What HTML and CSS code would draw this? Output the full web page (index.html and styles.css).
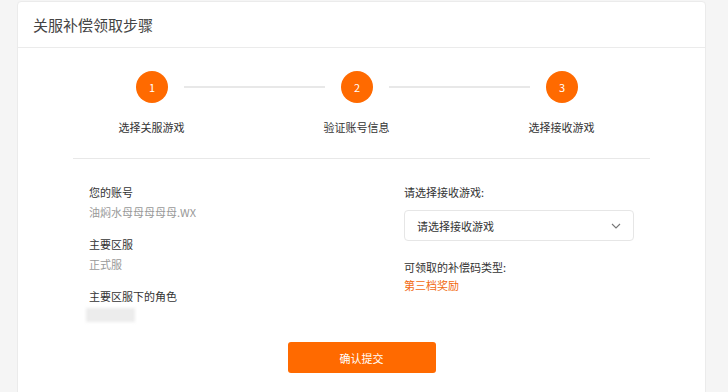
FILE: index.html
```html
<!DOCTYPE html>
<html lang="zh-CN">
<head>
    <meta charset="UTF-8">
    <meta name="viewport" content="width=device-width, initial-scale=1.0">
    <title>关服补偿领取步骤</title>
    <link rel="stylesheet" href="styles.css">
</head>
<body>
    <div class="card">
        <div class="card-header">
            <h1>关服补偿领取步骤</h1>
        </div>

        <div class="card-body">
            <div class="steps">
                <div class="steps-track">
                    <div class="step-dot">1</div>
                    <div class="step-line"></div>
                    <div class="step-dot">2</div>
                    <div class="step-line"></div>
                    <div class="step-dot">3</div>
                </div>
                <div class="steps-labels">
                    <span>选择关服游戏</span>
                    <span>验证账号信息</span>
                    <span>选择接收游戏</span>
                </div>
            </div>

            <div class="divider"></div>

            <div class="info">
                <div class="info-col">
                    <div class="field">
                        <div class="field-label">您的账号</div>
                        <div class="field-value">油焖水母母母母母.WX</div>
                    </div>
                    <div class="field">
                        <div class="field-label">主要区服</div>
                        <div class="field-value">正式服</div>
                    </div>
                    <div class="field field-role">
                        <div class="field-label">主要区服下的角色</div>
                        <div class="blurred"></div>
                    </div>
                </div>

                <div class="info-col">
                    <div class="field-label">请选择接收游戏:</div>
                    <div class="select">
                        <span>请选择接收游戏</span>
                        <svg width="10" height="6" viewBox="0 0 10 6">
                            <path d="M1 1l4 4 4-4" fill="none" stroke="#777" stroke-width="1.1"/>
                        </svg>
                    </div>
                    <div class="field-label reward-label">可领取的补偿码类型:</div>
                    <div class="reward">第三档奖励</div>
                </div>
            </div>

            <div class="actions">
                <button type="button" class="btn-submit">确认提交</button>
            </div>
        </div>
    </div>
</body>
</html>
```

FILE: styles.css
```css
:root {
    --orange: #ff6a00;
    --border: #ebebeb;
    --text: #333;
    --muted: #999;
}

* {
    margin: 0;
    padding: 0;
    box-sizing: border-box;
    font-family: "Noto Sans CJK SC", "Noto Sans", sans-serif;
}

body {
    background: #f5f5f5;
    padding: 1px 22px 0 17px;
    min-height: 100vh;
}

.card {
    background: white;
    border: 1px solid var(--border);
    border-radius: 4px;
    min-height: 420px;
}

.card-header {
    height: 46px;
    display: flex;
    align-items: center;
    padding: 0 15px;
    border-bottom: 1px solid var(--border);
}

.card-header h1 {
    font-size: 15px;
    font-weight: 400;
    color: #444;
}

.card-body {
    padding-top: 23px;
}

.steps-track {
    display: flex;
    align-items: center;
    padding-left: 118px;
    width: 560px;
}

.step-dot {
    width: 32px;
    height: 32px;
    border-radius: 50%;
    background: var(--orange);
    color: white;
    font-size: 11px;
    display: flex;
    align-items: center;
    justify-content: center;
    flex-shrink: 0;
}

.step-line {
    flex: 1;
    height: 2px;
    background: #e8e8e8;
    margin: 0 16px;
}

.steps-labels {
    display: grid;
    grid-template-columns: repeat(3, 205px);
    margin: 14px 0 0 31px;
    font-size: 11px;
    line-height: 20px;
    color: var(--text);
    text-align: center;
}

.divider {
    height: 1px;
    background: #e8e8e8;
    margin: 21px 55px 0 55px;
}

.info {
    display: grid;
    grid-template-columns: 315px 230px;
    padding: 23px 0 0 71px;
    font-size: 11px;
    line-height: 20px;
}

.field {
    margin-bottom: 12px;
}

.field-role {
    margin-top: 9px;
    margin-bottom: 0;
}

.field-label {
    color: var(--text);
}

.field-value {
    color: var(--muted);
}

.blurred {
    width: 49px;
    height: 14px;
    margin: 2px 0 0 -3px;
    background: #ececec;
    filter: blur(1.5px);
}

.select {
    height: 31px;
    margin-top: 8px;
    border: 1px solid #e6e6e6;
    border-radius: 4px;
    padding: 0 12px;
    display: flex;
    align-items: center;
    justify-content: space-between;
    color: var(--text);
}

.reward-label {
    margin-top: 16px;
}

.reward {
    color: #f26a10;
    line-height: 16px;
}

.actions {
    display: flex;
    justify-content: center;
    padding: 20px 0 0 0;
}

.btn-submit {
    width: 148px;
    height: 31px;
    border: none;
    border-radius: 3px;
    background: var(--orange);
    color: white;
    font-size: 11px;
    cursor: pointer;
}
```
